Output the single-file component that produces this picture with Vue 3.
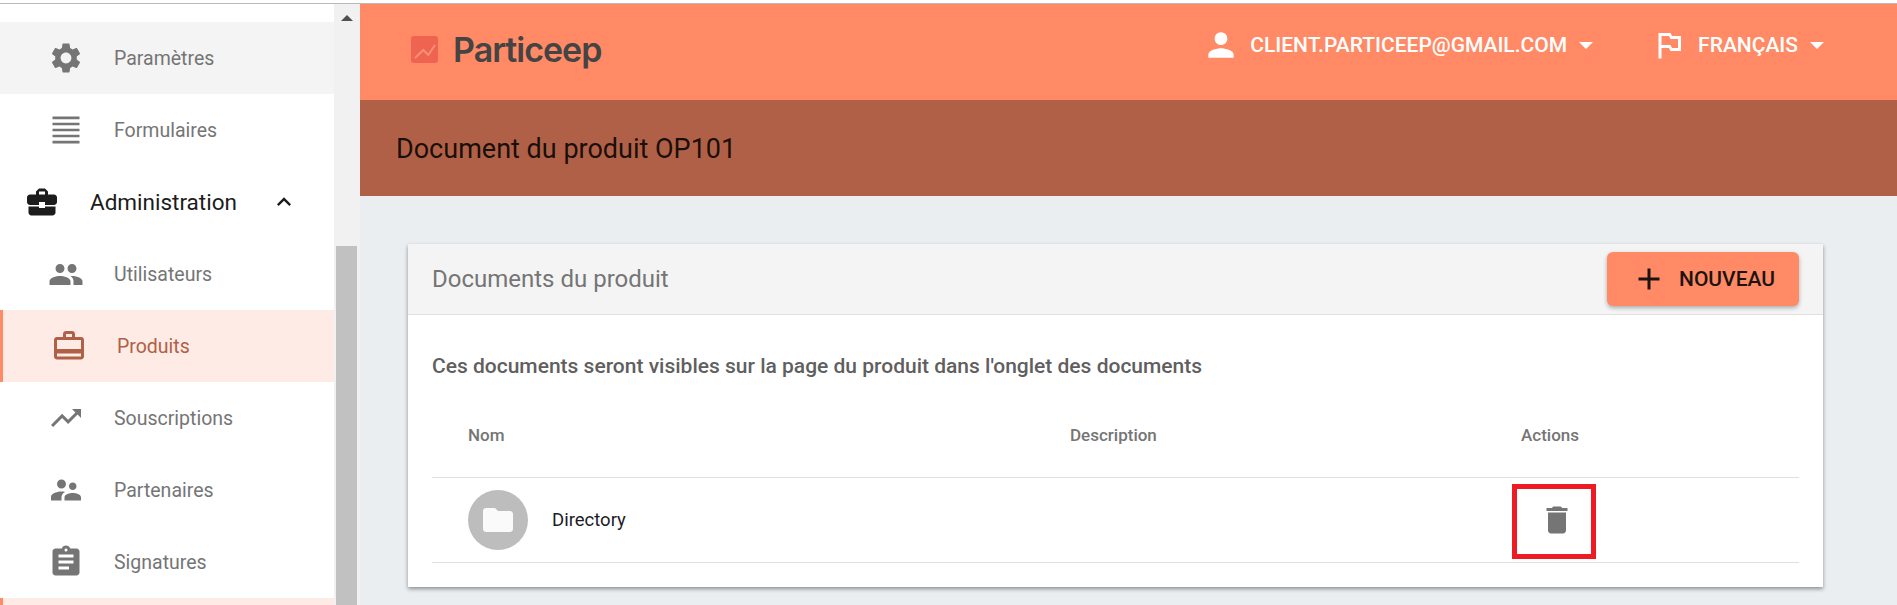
<script setup>
const items = [
  { label: 'Paramètres', cls: 'hover', size: 38, d: 'M19.14 12.94c.04-.3.06-.61.06-.94 0-.32-.02-.64-.07-.94l2.03-1.58c.18-.14.23-.41.12-.61l-1.92-3.32c-.12-.22-.37-.29-.59-.22l-2.39.96c-.5-.38-1.03-.7-1.62-.94l-.36-2.54c-.04-.24-.24-.41-.48-.41h-3.84c-.24 0-.43.17-.47.41l-.36 2.54c-.59.24-1.13.57-1.62.94l-2.39-.96c-.22-.08-.47 0-.59.22L2.74 8.87c-.12.21-.08.47.12.61l2.03 1.58c-.05.3-.09.63-.09.94s.02.64.07.94l-2.03 1.58c-.18.14-.23.41-.12.61l1.92 3.32c.12.22.37.29.59.22l2.39-.96c.5.38 1.03.7 1.62.94l.36 2.54c.05.24.24.41.48.41h3.84c.24 0 .44-.17.47-.41l.36-2.54c.59-.24 1.13-.56 1.62-.94l2.39.96c.22.08.47 0 .59-.22l1.92-3.32c.12-.22.07-.47-.12-.61l-2.01-1.58zM12 15.6c-1.98 0-3.6-1.62-3.6-3.6s1.62-3.6 3.6-3.6 3.6 1.62 3.6 3.6-1.62 3.6-3.6 3.6z' },
  { label: 'Formulaires', cls: '', size: 36, d: 'M3 3h18v1.8H3zM3 7.1h18v1.8H3zM3 11.1h18v1.8H3zM3 15.1h18v1.8H3zM3 19.2h18V21H3z' },
  { label: 'Administration', cls: 'section', size: 36, d: 'M10 16v-1H3.01L3 19c0 1.11.89 2 2 2h14c1.11 0 2-.89 2-2v-4h-7v1h-4zm10-9h-4.01V5l-2-2h-4l-2 2v2H4c-1.1 0-2 .9-2 2v3c0 1.11.89 2 2 2h6v-2h4v2h6c1.1 0 2-.9 2-2V9c0-1.1-.9-2-2-2zm-6 0h-4V5h4v2z' },
  { label: 'Utilisateurs', cls: '', size: 37, d: 'M16 11c1.66 0 2.99-1.34 2.99-3S17.66 5 16 5c-1.66 0-3 1.34-3 3s1.34 3 3 3zm-8 0c1.66 0 2.99-1.34 2.99-3S9.66 5 8 5C6.34 5 5 6.34 5 8s1.34 3 3 3zm0 2c-2.33 0-7 1.17-7 3.5V19h14v-2.5c0-2.33-4.67-3.5-7-3.5zm8 0c-.29 0-.62.02-.97.05 1.16.84 1.97 1.97 1.97 3.45V19h6v-2.5c0-2.33-4.67-3.5-7-3.5z' },
  { label: 'Produits', cls: 'active', size: 36, d: 'M20 6h-4V4c0-1.11-.89-2-2-2h-4c-1.11 0-2 .89-2 2v2H4c-1.11 0-2 .89-2 2v11c0 1.11.89 2 2 2h16c1.11 0 2-.89 2-2V8c0-1.11-.89-2-2-2zM10 4h4v2h-4V4zm10 15H4v-2h16v2zm0-5H4V8h16v6z' },
  { label: 'Souscriptions', cls: '', size: 36, d: 'M16 6l2.29 2.29-4.88 4.88-4-4L2 16.59 3.41 18l6-6 4 4 6.3-6.29L22 12V6z' },
  { label: 'Partenaires', cls: '', size: 36, d: 'M16.5 12c1.38 0 2.49-1.12 2.49-2.5S17.88 7 16.5 7C15.12 7 14 8.12 14 9.5s1.12 2.5 2.5 2.5zM9 11c1.66 0 2.99-1.34 2.99-3S10.66 5 9 5C7.34 5 6 6.34 6 8s1.34 3 3 3zm7.5 3c-1.83 0-5.5.92-5.5 2.75V19h11v-2.25c0-1.83-3.67-2.75-5.5-2.75zM9 13c-2.33 0-7 1.17-7 3.5V19h7v-2.25c0-.85.33-2.34 2.37-3.47C10.5 13.1 9.66 13 9 13z' },
  { label: 'Signatures', cls: '', size: 36, d: 'M19 3h-4.18C14.4 1.84 13.3 1 12 1c-1.3 0-2.4.84-2.82 2H5c-1.1 0-2 .9-2 2v14c0 1.1.9 2 2 2h14c1.1 0 2-.9 2-2V5c0-1.1-.9-2-2-2zm-7 0c.55 0 1 .45 1 1s-.45 1-1 1-1-.45-1-1 .45-1 1-1zm2 14H7v-2h7v2zm3-4H7v-2h10v2zm0-4H7V7h10v2z' },
]
</script>

<template>
  <div class="page">
    <div class="topline"></div>
    <div class="shell">
      <aside class="rail">
        <nav class="nav">
          <div v-for="item in items" :key="item.label" class="item" :class="item.cls">
            <span class="icon-slot">
              <svg :width="item.size" :height="item.size" viewBox="0 0 24 24" fill="currentColor"><path :d="item.d" /></svg>
            </span>
            <span class="label">{{ item.label }}</span>
            <svg v-if="item.cls === 'section'" class="chev" width="28" height="28" viewBox="0 0 24 24" fill="currentColor"><path d="M12 8l-6 6 1.41 1.41L12 10.83l4.59 4.58L18 14z" /></svg>
          </div>
          <div class="item active"></div>
        </nav>
        <div class="scrollbar">
          <span class="arrow"></span>
          <span class="thumb"></span>
        </div>
      </aside>

      <main class="main">
        <header class="appbar">
          <div class="brand">
            <svg class="logo" width="27" height="27" viewBox="0 0 27 27">
              <rect width="27" height="27" rx="3" fill="#ef6351" />
              <path d="M4 22l8.300-8 5 5L24 9" fill="none" stroke="#fb8f74" stroke-width="2" />
            </svg>
            <span class="brand-name">Particeep</span>
          </div>
          <div class="menu user">
            <svg width="38" height="38" viewBox="0 0 24 24" fill="#fff"><path d="M12 12c2.210 0 4-1.790 4-4s-1.790-4-4-4-4 1.790-4 4 1.790 4 4 4zm0 2c-2.670 0-8 1.340-8 4v2h16v-2c0-2.660-5.330-4-8-4z" /></svg>
            <span>client.particeep@gmail.com</span>
            <i class="caret"></i>
          </div>
          <div class="menu lang">
            <svg width="36" height="36" viewBox="0 0 24 24" fill="#fff"><path d="M14 6l-1-2H5v17h2v-7h5l1 2h7V6h-6zm4 8h-4l-1-2H7V6h5l1 2h5v6z" /></svg>
            <span>français</span>
            <i class="caret"></i>
          </div>
        </header>
        <div class="subbar">Document du produit OP101</div>
        <section class="content">
          <div class="card">
            <div class="card-head">
              <h2>Documents du produit</h2>
              <button class="btn">
                <svg width="36" height="36" viewBox="0 0 24 24" fill="currentColor"><path d="M19 13h-6v6h-2v-6H5v-2h6V5h2v6h6v2z" /></svg>
                <span>Nouveau</span>
              </button>
            </div>
            <div class="card-body">
              <p class="intro">Ces documents seront visibles sur la page du produit dans l'onglet des documents</p>
              <div class="row thead">
                <span>Nom</span><span>Description</span><span>Actions</span>
              </div>
              <div class="row tbody">
                <span class="name">
                  <span class="avatar">
                    <svg width="36" height="36" viewBox="0 0 24 24" fill="#fafafa"><path d="M10 4H4c-1.100 0-2 .9-2 2v12c0 1.100.9 2 2 2h16c1.100 0 2-.9 2-2V8c0-1.100-.9-2-2-2h-8l-2-2z" /></svg>
                  </span>
                  Directory
                </span>
                <span></span>
                <span class="act">
                  <svg width="36" height="36" viewBox="0 0 24 24" fill="#757575"><path d="M6 19c0 1.100.9 2 2 2h8c1.100 0 2-.9 2-2V7H6v12zM19 4h-3.500l-1-1h-5l-1 1H5v2h14V4z" /></svg>
                  <span class="redbox"></span>
                </span>
              </div>
            </div>
          </div>
        </section>
      </main>
    </div>
  </div>
</template>

<style>
html, body { margin: 0; overflow: hidden; }
</style>

<style scoped>
.page { width: 1897px; height: 605px; overflow: hidden; background: #fff; font-family: Roboto, "Liberation Sans", sans-serif; }
.topline { height: 3px; border-bottom: 1px solid #b9b9b9; }
.shell { display: flex; height: 601px; }
.rail { width: 360px; display: flex; flex: none; }
.nav { width: 334px; padding-top: 18px; overflow: hidden; }
.item { height: 72px; display: flex; align-items: center; color: #757575; font-size: 19.500px; flex: none; }
.icon-slot { width: 36px; margin-left: 48px; margin-right: 30px; display: flex; justify-content: center; flex: none; }
.item.hover { background: #f4f4f4; }
.item.section { color: #1c1c1c; font-size: 22.500px; }
.item.section .icon-slot { margin-left: 24px; margin-right: 30px; }
.chev { margin-left: 33px; }
.item.active { background: #ffebe5; color: #b06046; border-left: 3px solid #ff8a65; }
.scrollbar { width: 26px; background: #f1f1f1; position: relative; display: flex; flex-direction: column; align-items: center; }
.arrow { margin-top: 11px; width: 0; height: 0; border-left: 6px solid transparent; border-right: 6px solid transparent; border-bottom: 6px solid #505050; }
.thumb { position: absolute; left: 2px; top: 242px; width: 21px; bottom: 0; background: #c1c1c1; }
.main { flex: 1; min-width: 0; background: #eaeef1; }
.appbar { height: 96px; background: #ff8a65; display: flex; align-items: center; color: #fff; padding-bottom: 14px; box-sizing: border-box; }
.brand { display: flex; align-items: center; margin-left: 51px; margin-right: auto; margin-top: 9px; }
.logo { margin-right: 15px; }
.brand-name { font-family: Inter, sans-serif; font-weight: 600; font-size: 34px; letter-spacing: -1px; color: #444; line-height: 36px; }
.menu { display: flex; align-items: center; font-weight: 500; font-size: 21px; text-transform: uppercase; }
.user span { margin-left: 10px; }
.user { margin-right: 58px; }
.lang span { margin-left: 11px; }
.lang { margin-right: 73px; }
.caret { margin-left: 12px; width: 0; height: 0; border-left: 7.500px solid transparent; border-right: 7.500px solid transparent; border-top: 7.500px solid #fff; }
.subbar { height: 96px; background: #b06046; color: rgba(0,0,0,.87); font-size: 27px; display: flex; align-items: center; padding-left: 36px; padding-top: 2px; box-sizing: border-box; }
.content { padding: 48px 74px 0 48px; }
.card { background: #fff; box-shadow: 0 2px 4px rgba(0,0,0,.4); }
.card-head { height: 70px; background: #f4f4f4; border-bottom: 1px solid #e0e0e0; display: flex; align-items: center; justify-content: space-between; padding: 0 24px; }
.card-head h2 { margin: 0; font-weight: 400; font-size: 24px; color: #757575; }
.btn { width: 192px; height: 54px; display: flex; align-items: center; gap: 12px; padding: 0 0 0 24px; border: 0; border-radius: 6px; background: #ff8a65; box-shadow: 0 2px 4px rgba(0,0,0,.3); font-family: inherit; font-weight: 500; font-size: 21px; color: #1d1310; text-transform: uppercase; box-sizing: border-box; }
.card-body { padding: 0 24px 24px; }
.intro { margin: 0; height: 102px; display: flex; align-items: center; font-weight: 500; font-size: 21px; color: #5f5f5f; }
.row { display: grid; grid-template-columns: 602px 451px 314px; border-bottom: 1px solid #e0e0e0; }
.row > span { padding-left: 36px; display: flex; align-items: center; }
.thead { height: 36px; align-items: center; color: #757575; font-weight: 500; font-size: 17px; padding-bottom: 24px; }
.tbody { height: 84px; font-size: 18.500px; color: #1c1c28; }
.name { gap: 24px; }
.avatar { width: 60px; height: 60px; border-radius: 50%; background: #bdbdbd; display: flex; align-items: center; justify-content: center; }
.act { position: relative; }
.act svg { margin-left: 18px; }
.redbox { position: absolute; left: 27px; top: 6px; width: 74px; height: 65px; border: 5px solid #ed1c24; }
</style>
